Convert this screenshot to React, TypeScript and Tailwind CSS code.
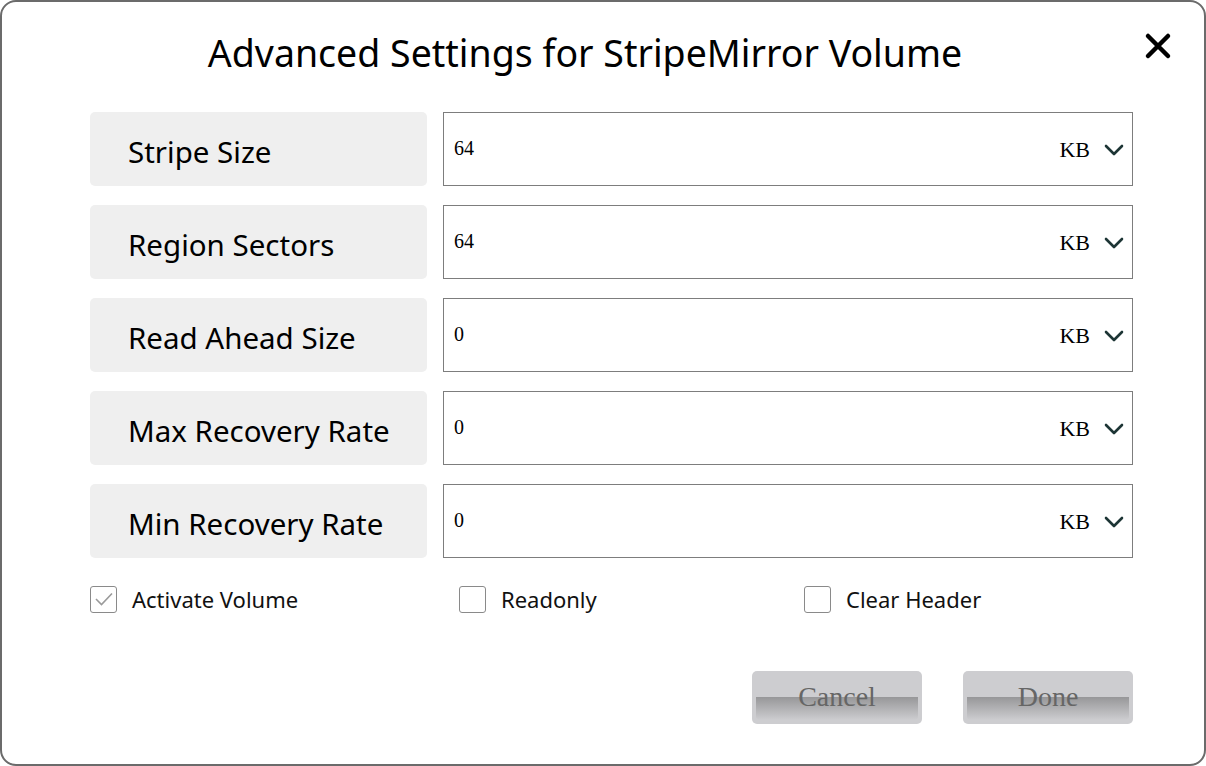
import React from 'react'

const rows = [
  { label: 'Stripe Size', value: '64' },
  { label: 'Region Sectors', value: '64' },
  { label: 'Read Ahead Size', value: '0' },
  { label: 'Max Recovery Rate', value: '0' },
  { label: 'Min Recovery Rate', value: '0' },
]

const Chevron = () => (
  <svg width="20" height="12" viewBox="0 0 20 12" fill="none">
    <path d="M2 2 L10 10 L18 2" stroke="#1d3535" strokeWidth="2.6" strokeLinecap="round" strokeLinejoin="round" />
  </svg>
)

const Check = ({ checked, label }: { checked?: boolean; label: string }) => (
  <div className="flex items-center gap-[15px]">
    <div className="w-[27px] h-[27px] border border-[#8a8a8a] rounded-[3px] bg-white flex items-center justify-center">
      {checked && (
        <svg width="20" height="16" viewBox="0 0 20 16" fill="none">
          <path d="M2 8 L7.5 13.5 L18 2.5" stroke="#9a9a9a" strokeWidth="1.6" />
        </svg>
      )}
    </div>
    <span className="text-[22px] text-[#111]">{label}</span>
  </div>
)

const Btn = ({ children }: { children: string }) => (
  <button className="relative w-[170px] h-[53px] rounded-[5px] bg-[#cdcdd0] overflow-hidden">
    <div className="absolute left-[4px] right-[4px] top-[26px] bottom-[4px] rounded-b-[4px] bg-gradient-to-b from-[#979799] to-[#cdcdd0]" />
    <span className="relative text-[28px] text-[#666] font-['Liberation_Serif',serif]">{children}</span>
  </button>
)

export default function App() {
  return (
    <div className="w-[1206px] h-[766px] bg-white font-['Noto_Sans',sans-serif]">
      <div className="relative w-full h-full border-2 border-[#6b6b6b] rounded-[16px] flex flex-col">
        <h1 className="text-center text-[37.5px] text-black leading-none pt-[32px] pr-[36px]">
          Advanced Settings for StripeMirror Volume
        </h1>
        <button className="absolute right-[32px] top-[30px]">
          <svg width="28" height="28" viewBox="0 0 28 28" fill="none">
            <path d="M4 4 L24 24 M24 4 L4 24" stroke="#000" strokeWidth="4.5" strokeLinecap="round" />
          </svg>
        </button>
        <div className="flex flex-col gap-[19px] pl-[88px] pr-[71px] mt-[40px]">
          {rows.map((r) => (
            <div key={r.label} className="flex gap-[16px] h-[74px]">
              <div className="w-[337px] bg-[#efefef] rounded-[5px] flex items-center pl-[38px] pt-[8px]">
                <span className="text-[29.5px] text-black">{r.label}</span>
              </div>
              <div className="flex-1 border border-[#7d7d7d] flex items-start justify-between pl-[10px] pr-[8px] font-['Liberation_Serif',serif]">
                <span className="text-[20px] text-black mt-[25px] leading-none">{r.value}</span>
                <div className="flex items-center gap-[14px] mt-[26px]">
                  <span className="text-[22px] text-black leading-none">KB</span>
                  <Chevron />
                </div>
              </div>
            </div>
          ))}
        </div>
        <div className="flex items-center pl-[88px] mt-[25px]">
          <div className="w-[369px]"><Check checked label="Activate Volume" /></div>
          <div className="w-[345px]"><Check label="Readonly" /></div>
          <Check label="Clear Header" />
        </div>
        <div className="flex justify-end gap-[41px] pr-[71px] mt-[55px]">
          <Btn>Cancel</Btn>
          <Btn>Done</Btn>
        </div>
      </div>
    </div>
  )
}
